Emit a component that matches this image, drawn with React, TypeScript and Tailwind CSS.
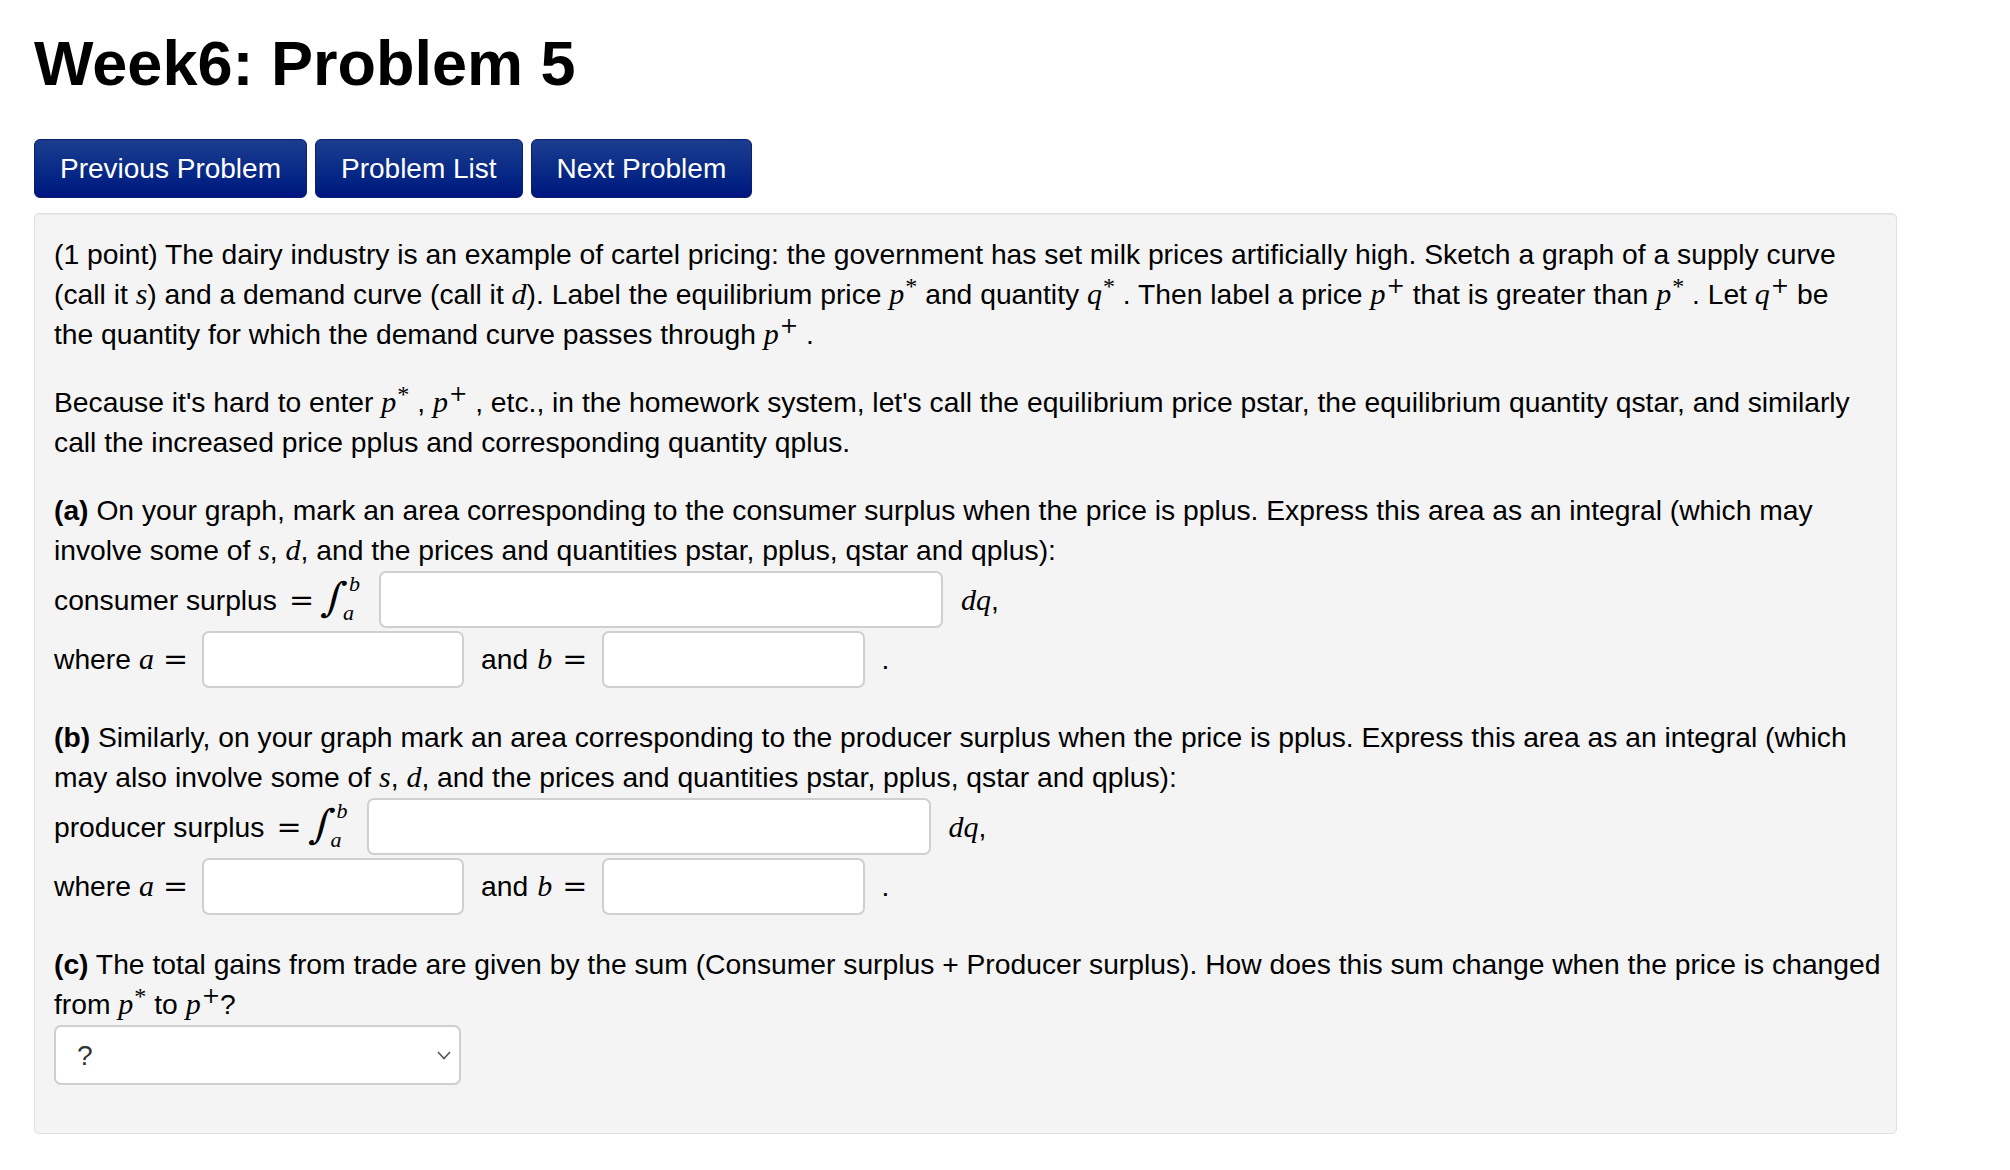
import React from 'react';

const serif = "[font-family:'Liberation_Serif',serif] italic";

function V({ c, sup }: { c: string; sup?: string }) {
  return (
    <span className="whitespace-nowrap leading-none">
      <span className={`${serif} text-[30px] leading-none`}>{c}</span>
      {sup === '*' && (
        <span className="relative -top-[10px] ml-[1px] text-[24px] leading-none [font-family:'Liberation_Serif',serif]">*</span>
      )}
      {sup === '+' && (
        <span className="relative -top-[11px] ml-[1px] text-[22px] leading-none [font-family:'DejaVu_Serif',serif]">+</span>
      )}
    </span>
  );
}

function Box({ w }: { w: string }) {
  return <div className={`${w} h-[57px] shrink-0 rounded-[7px] border-2 border-[#cfcfcf] bg-white`} />;
}

function Integral() {
  return (
    <span className="relative ml-[10px] inline-block h-[48px] w-[38px] shrink-0">
      <span className="absolute left-[0px] top-[1px] -skew-x-12 [font-family:'DejaVu_Serif',serif] text-[40px] leading-none">∫</span>
      <span className={`${serif} absolute left-[25px] -top-[3px] text-[22px] leading-none`}>b</span>
      <span className={`${serif} absolute left-[19px] top-[26px] text-[22px] leading-none`}>a</span>
    </span>
  );
}

function Eq() {
  return <span className="[font-family:'DejaVu_Serif',serif] text-[30px] leading-none">=</span>;
}

function WhereRow({ h }: { h: string }) {
  return (
    <div className={`flex ${h} items-center`}>
      <span>where</span>
      <span className="ml-[8px]">
        <V c="a" />
      </span>
      <span className="ml-[9px]">
        <Eq />
      </span>
      <span className="ml-[14px]">
        <Box w="w-[262px]" />
      </span>
      <span className="ml-[17px]">and</span>
      <span className="ml-[9px]">
        <V c="b" />
      </span>
      <span className="ml-[10px]">
        <Eq />
      </span>
      <span className="ml-[15px]">
        <Box w="w-[263px]" />
      </span>
      <span className="ml-[16px]">.</span>
    </div>
  );
}

export default function App() {
  return (
    <div className="min-h-screen bg-white pl-[34px] text-black [font-family:'Liberation_Sans',Arial,sans-serif]">
      {/* Title */}
      <h1 className="pt-[32px] text-[63px] font-bold leading-[63px]">Week6: Problem 5</h1>

      {/* Nav buttons */}
      <div className="mt-[44px] flex gap-[8px]">
        {['Previous Problem', 'Problem List', 'Next Problem'].map((t) => (
          <button
            key={t}
            className="h-[59px] rounded-[6px] border border-[#0b1f6e] bg-gradient-to-b from-[#1b3d8f] to-[#00157f] px-[25px] text-[28px] text-white"
          >
            {t}
          </button>
        ))}
      </div>

      {/* Problem body */}
      <div className="mt-[15px] w-[1863px] rounded-[5px] border border-[#e0e0e0] bg-[#f4f4f4] pb-[48px] pl-[19px] pr-[6px] pt-[20px] text-[28.25px] leading-[40px] shadow-[inset_0_1px_1px_rgba(0,0,0,0.05)]">
        <div className="whitespace-nowrap">
          (1 point) The dairy industry is an example of cartel pricing: the government has set milk prices artificially high. Sketch a graph of a supply curve
          <br />
          (call it <V c="s" />) and a demand curve (call it <V c="d" />). Label the equilibrium price <V c="p" sup="*" /> and quantity <V c="q" sup="*" /> . Then label a price <V c="p" sup="+" /> that is greater than <V c="p" sup="*" /> . Let <V c="q" sup="+" /> be
          <br />
          the quantity for which the demand curve passes through <V c="p" sup="+" /> .
        </div>

        <div className="mt-[28px] whitespace-nowrap">
          Because it's hard to enter <V c="p" sup="*" /> , <V c="p" sup="+" /> , etc., in the homework system, let's call the equilibrium price pstar, the equilibrium quantity qstar, and similarly
          <br />
          call the increased price pplus and corresponding quantity qplus.
        </div>

        {/* (a) */}
        <div className="mt-[28px] whitespace-nowrap">
          <b>(a)</b> On your graph, mark an area corresponding to the consumer surplus when the price is pplus. Express this area as an integral (which may
          <br />
          involve some of <V c="s" />, <V c="d" />, and the prices and quantities pstar, pplus, qstar and qplus):
        </div>
        <div className="flex h-[59px] items-center">
          <span>consumer surplus</span>
          <span className="ml-[12px]">
            <Eq />
          </span>
          <Integral />
          <span className="ml-[17px]">
            <Box w="w-[564px]" />
          </span>
          <span className="ml-[18px]">
            <V c="dq" />,
          </span>
        </div>
        <WhereRow h="h-[60px]" />

        {/* (b) */}
        <div className="mt-[28px] whitespace-nowrap">
          <b>(b)</b> Similarly, on your graph mark an area corresponding to the producer surplus when the price is pplus. Express this area as an integral (which
          <br />
          may also involve some of <V c="s" />, <V c="d" />, and the prices and quantities pstar, pplus, qstar and qplus):
        </div>
        <div className="flex h-[59px] items-center">
          <span>producer surplus</span>
          <span className="ml-[12px]">
            <Eq />
          </span>
          <Integral />
          <span className="ml-[17px]">
            <Box w="w-[564px]" />
          </span>
          <span className="ml-[18px]">
            <V c="dq" />,
          </span>
        </div>
        <WhereRow h="h-[60px]" />

        {/* (c) */}
        <div className="mt-[28px] whitespace-nowrap">
          <b>(c)</b> The total gains from trade are given by the sum (Consumer surplus + Producer surplus). How does this sum change when the price is changed
          <br />
          from <V c="p" sup="*" /> to <V c="p" sup="+" />?
        </div>
        <div className="mt-[1px] flex h-[60px] w-[407px] items-center justify-between rounded-[7px] border-2 border-[#cfcfcf] bg-white pl-[21px] pr-[8px]">
          <span className="text-[#333]">?</span>
          <svg width="14" height="9" viewBox="0 0 14 9" fill="none">
            <polyline points="1,1 7,7.5 13,1" stroke="#555" strokeWidth="1.6" />
          </svg>
        </div>
      </div>
    </div>
  );
}
